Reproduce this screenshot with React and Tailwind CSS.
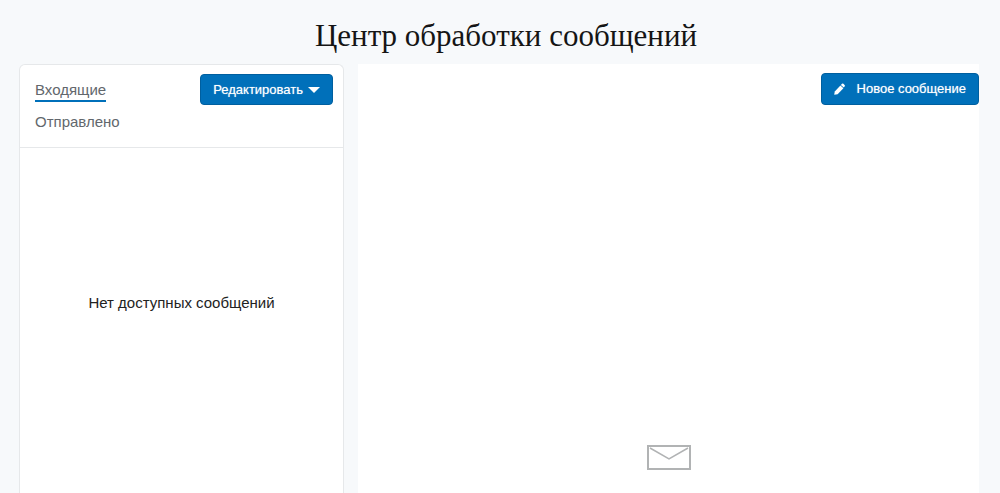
function Envelope() {
  return (
    <svg width="44" height="25" viewBox="0 0 44 25" fill="none" stroke="#b1b3b4" aria-hidden="true">
      <rect x="1" y="1" width="42" height="23" strokeWidth="2" />
      <path d="M3 3 L22 14 L41 3" strokeWidth="1.5" />
    </svg>
  );
}

function Pencil() {
  return (
    <svg width="11" height="12" viewBox="0 0 11 12" fill="currentColor" aria-hidden="true">
      <path d="M0.2 11.8 L0.8 8.4 L6.4 2.4 L9.4 5.2 L3.6 11.2 Z" />
      <path d="M6.9 1.9 L8 0.8 Q8.7 0.2 9.4 0.8 L10.6 2 Q11.2 2.7 10.6 3.4 L9.8 4.6 Z" />
    </svg>
  );
}

function MailboxPanel() {
  return (
    <section className="flex w-[34%] max-w-[325px] shrink-0 flex-col rounded-t-md border border-b-0 border-[#e6e8ea] bg-white">
      <header className="flex items-start justify-between border-b border-[#e6e8ea] pt-[9px] pr-[10px] pb-[15px] pl-[15px]">
        <nav className="flex flex-col items-start gap-[9px] pt-[5px] text-[15px] leading-[21px] text-[#62676c]">
          <a href="#inbox" aria-current="page" className="border-b-2 border-[#0070ba]">
            Входящие
          </a>
          <a href="#sent">Отправлено</a>
        </nav>
        <button
          type="button"
          aria-haspopup="menu"
          className="flex h-[31px] items-center gap-[5px] rounded border border-[#005f9f] bg-[#0070ba] px-3 text-[13px] whitespace-nowrap text-white text-shadow-[0_0_1px_#ffffff99]"
        >
          Редактировать
          <svg width="12" height="6" viewBox="0 0 12 6" fill="currentColor" aria-hidden="true">
            <path d="M0 0 H12 L6 6 Z" />
          </svg>
        </button>
      </header>
      <p className="px-4 pt-[143px] text-center text-[15px] leading-6 text-[#222]">
        Нет доступных сообщений
      </p>
    </section>
  );
}

function MessagePanel() {
  return (
    <section className="flex flex-1 flex-col bg-white">
      <header className="flex justify-end pt-[9px]">
        <button
          type="button"
          className="flex h-8 items-center gap-3 rounded border border-[#005f9f] bg-[#0070ba] px-3 text-[13px] whitespace-nowrap text-white text-shadow-[0_0_1px_#ffffff99]"
        >
          <Pencil />
          Новое сообщение
        </button>
      </header>
      <div className="flex flex-1 items-end justify-center pt-40 pb-[23px]">
        <Envelope />
      </div>
    </section>
  );
}

export default function App() {
  return (
    <div className="flex min-h-screen flex-col bg-[#f7f9fb] pr-[21px] pl-[19px] font-['Liberation_Sans',Arial,sans-serif]">
      <h1 className="pt-4 pb-2 pl-[14px] text-center font-['Liberation_Serif',serif] text-[31px] leading-10 text-[#151515]">
        Центр обработки сообщений
      </h1>
      <main className="flex flex-1 gap-[14px]">
        <MailboxPanel />
        <MessagePanel />
      </main>
    </div>
  );
}
